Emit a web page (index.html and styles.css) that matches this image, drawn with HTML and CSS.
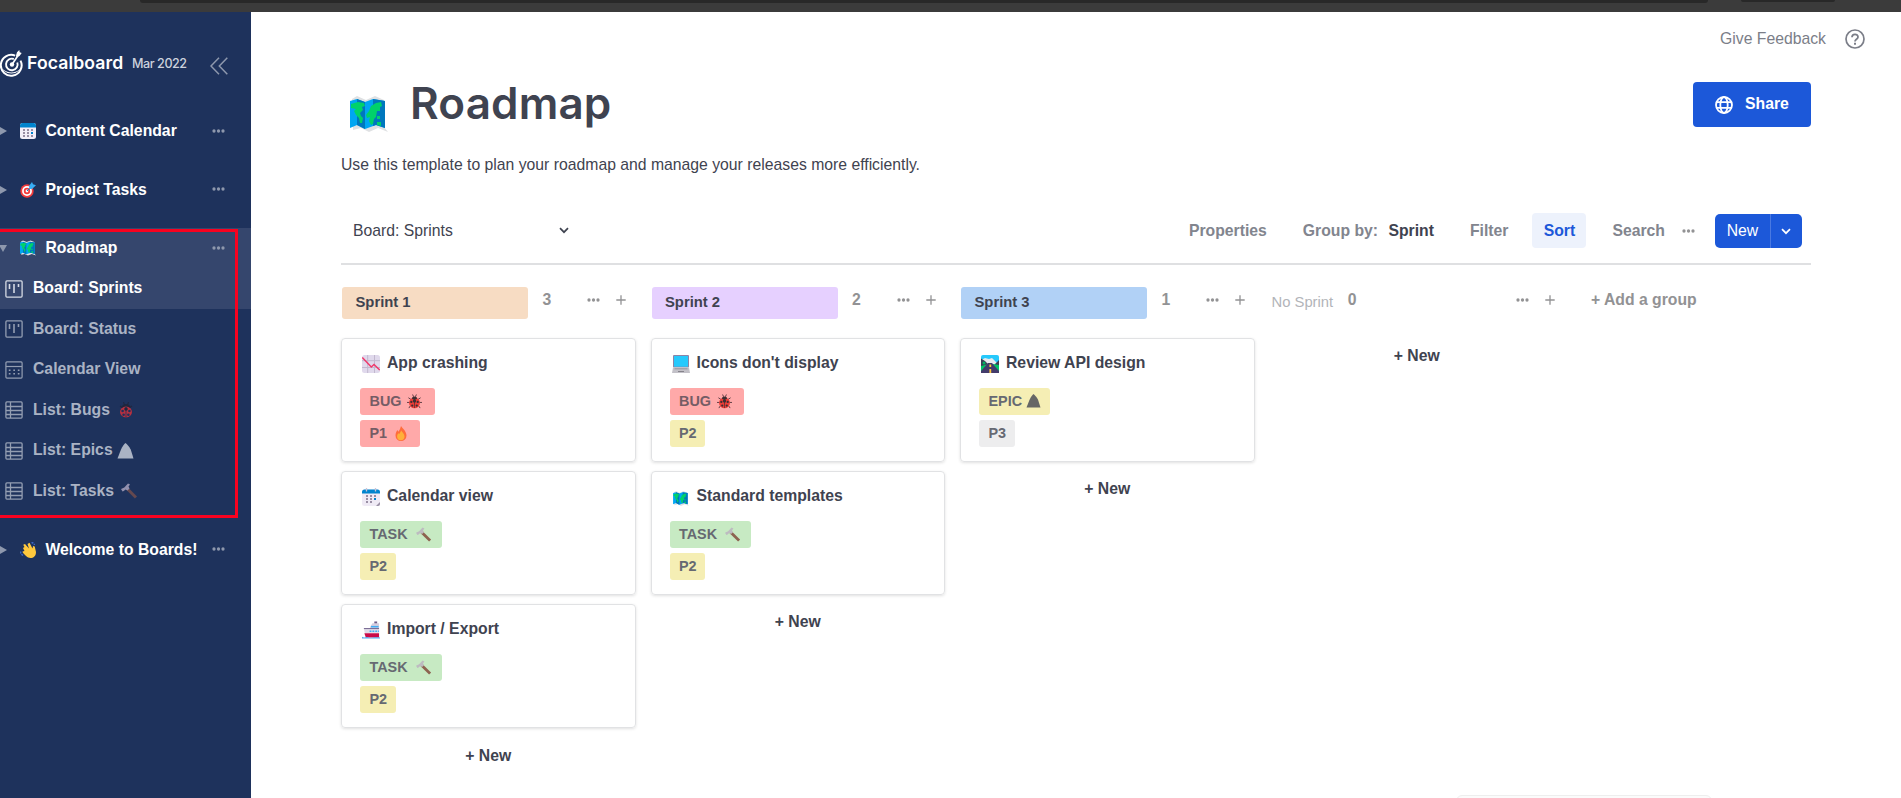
FILE: index.html
```
<!DOCTYPE html>
<html lang="en">
<head>
<meta charset="utf-8">
<title>Focalboard</title>
<link rel="stylesheet" href="styles.css">
</head>
<body>
<svg class="defs" width="0" height="0">
  <symbol id="dots" viewBox="0 0 14 4"><circle cx="2" cy="2" r="1.65"/><circle cx="6.5" cy="2" r="1.65"/><circle cx="11" cy="2" r="1.65"/></symbol>
  <symbol id="plus" viewBox="0 0 10 10"><path d="M5 .3v9.400M.3 5h9.400" fill="none" stroke="currentColor" stroke-width="1.300"/></symbol>
  <symbol id="chev" viewBox="0 0 10 7"><path d="M1 1.2l4 4 4-4" fill="none" stroke="currentColor" stroke-width="1.7"/></symbol>
  <symbol id="i-board" viewBox="0 0 18 18"><g fill="none" stroke="currentColor" stroke-width="1.3"><rect x=".9" y=".9" width="16.2" height="16.2" rx="1"/><path d="M4.5 4v5M9 4v9M13.500 4v3" stroke-width="1.6"/></g></symbol>
  <symbol id="i-cal" viewBox="0 0 18 18"><g fill="none" stroke="currentColor" stroke-width="1.2"><rect x=".9" y=".9" width="16.2" height="16.2" rx="1"/><path d="M1 5.5h16"/><path d="M3.8 9.2h11M3.8 12.8h11" stroke-width="1.6" stroke-dasharray="1.7 2.8"/></g></symbol>
  <symbol id="i-list" viewBox="0 0 18 18"><g fill="none" stroke="currentColor" stroke-width="1.3"><rect x=".9" y=".9" width="16.2" height="16.2" rx="1"/><path d="M5.5 1v16M1 5.500h16M1 9.500h16M1 13.500h16"/></g></symbol>
  <symbol id="e-cal" viewBox="0 0 18 18"><rect y="1.500" width="18" height="16.500" rx="2.500" fill="#efeaf5"/><path d="M0 5.500V4a2.500 2.500 0 0 1 2.500-2.500h13A2.500 2.500 0 0 1 18 4v1.500z" fill="#0084ce"/><path d="M4.500 0v3.500M13.500 0v3.500" stroke="#cdc4d6" stroke-width="1.300"/><g fill="#998ea4"><path d="M4 7h2v2H4zM8 7h2v2H8zM12 7h2v2h-2zM4 10h2v2H4zM8 10h2v2H8zM4 13h2v2H4zM8 13h2v2H8z"/></g><path d="M12 10h2v2h-2z" fill="#0084ce"/><path d="M14 18l4-4v2a2 2 0 0 1-2 2z" fill="#998ea4"/></symbol>
  <symbol id="e-calflat" viewBox="0 0 16 16"><rect width="16" height="16" rx="2.5" fill="#f3eef8"/><path d="M0 4.500V2.500A2.500 2.500 0 0 1 2.500 0h11A2.500 2.500 0 0 1 16 2.500v2z" fill="#0084ce"/><path d="M3 6h2v2H3zM7 6h2v2H7zM11 6h2v2h-2zM3 9h2v2H3zM7 9h2v2H7zM3 12h2v2H3zM7 12h2v2H7zM11 12h2v2h-2z" fill="#998ea4"/><path d="M11 9h2v2h-2z" fill="#0084ce"/></symbol>
  <symbol id="e-target" viewBox="0 0 16 16"><circle cx="7" cy="9" r="6.700" fill="#f23c3c"/><circle cx="7" cy="9" r="4.900" fill="#fff"/><circle cx="7" cy="9" r="3.200" fill="#f23c3c"/><circle cx="7" cy="9" r="1.400" fill="#fff"/><path d="M7 9l4-4.200" stroke="#0084ce" stroke-width="1"/><path d="M9 4l3-4 1 2.300 3 1-4 3.700-2.500 0z" fill="#38aef5"/></symbol>
  <symbol id="e-map" viewBox="0 0 38 36"><path d="M2 3L7 0l9 4 9-4 9 4v27l4 5-10-4-9 4-8-4-8 2z" fill="#dfe1e3"/><path d="M0 5l7-2 8 3 8-3 12 2v27l-9-3-11 4-8-4-7 3z" fill="#00a6f2"/><path d="M7 3l8 3v27l-8-4zM23 3l12 2v27l-9-3-3 1z" fill="#0077bd"/><path d="M1 8l7-2 6 1 1 3-3 1 1 3-3 3 1 3 2 2-1 5-2 0-1-5-3-3-2-4 2-2-5-1zM16 19l3-4 2-5 5-3 5-1 1 4-2 1 0 4-3 0-1 6-2 2-1 5-2 1-2-4 1-4-3 1zM27 20l3 0v3l-3 0zM27 26l4 0v4l-4-1z" fill="#00d26a"/></symbol>
  <symbol id="e-bug" viewBox="0 0 16 16"><path d="M1.500 4l3 2M14.500 4l-3 2M0 9h4M12 9h4M2 15l2-3M14 15l-2-3M6 .5l1 2.500M10 .5L9 3" stroke="#5b3a40" stroke-width="1" fill="none"/><ellipse cx="8" cy="9.500" rx="5.800" ry="5.800" fill="#ee3d37"/><path d="M5 4.600a3.200 3 0 0 1 6 0c-1 1.800-5 1.800-6 0zM7.700 5h.7v10h-.7z" fill="#3d2f33"/><circle cx="8" cy="7.500" r="1.800" fill="#3d2f33"/><circle cx="4.600" cy="8.500" r="1.200" fill="#3d2f33"/><circle cx="11.400" cy="8.500" r="1.200" fill="#3d2f33"/><circle cx="5.600" cy="12.300" r="1.200" fill="#3d2f33"/><circle cx="10.400" cy="12.300" r="1.200" fill="#3d2f33"/></symbol>
  <symbol id="e-bugdark" viewBox="0 0 14 16"><path d="M1 4l3 2M13 4l-3 2M4.500 0l1 3M9.500 0l-1 3" stroke="#202840" stroke-width="1.100"/><path d="M2.500 6a4.500 4 0 0 1 9 0z" fill="#20273e"/><ellipse cx="7" cy="10" rx="6" ry="5.400" fill="#b9303f"/><path d="M6.600 5h.8v10.500h-.8z" fill="#20305a"/><circle cx="7" cy="7" r="1.800" fill="#20273e"/><circle cx="3.600" cy="9" r="1.300" fill="#20305a"/><circle cx="10.400" cy="9" r="1.300" fill="#20305a"/><circle cx="4.600" cy="12.800" r="1.300" fill="#20305a"/><circle cx="9.400" cy="12.800" r="1.300" fill="#20305a"/></symbol>
  <symbol id="e-fire" viewBox="0 0 12 15"><path d="M6 0c1 2 5.500 5 5.500 9.500A5.500 5.500 0 0 1 .5 9.500C.5 7 1.500 5 2.500 4l.8 1.700C4.500 4.500 5.500 2 6 0z" fill="#ff6d3b"/><path d="M6.300 4.500c.5 1.500 3.200 3 3.200 6a3.700 3.700 0 0 1-7.400 0c0-2 .8-2.500 1.400-3.300l.8.800z" fill="#ffb03a"/></symbol>
  <symbol id="e-hammer" viewBox="0 0 16 16"><path d="M6 5.500l9 9" stroke="var(--handle)" stroke-width="3"/><path d="M0 6l3.300-1.500L7 .5l2 1-1.500 2 1 2-2 2-2-1-1.700 1.500-1.300.5z" fill="var(--head)"/></symbol>
  <symbol id="e-mount" viewBox="0 0 16 16"><path d="M0 15.500L3.500 6.500C5 3.500 6.500 1 8 0c1.500 1 3.500 3.500 5.200 6.500L16 15.500z" fill="currentColor"/></symbol>
  <symbol id="e-wave" viewBox="0 0 16 16"><path d="M3 6l1.500-1L3.200 2.800 5 2l4 4.500L7.500 2 9.500.8l3 5.700.6-2.500 1.600.4L16 10c0 4-2.500 6-5.500 6C7 16 5.500 13 3 11l-.5-1.500L4.500 9z" fill="#ffc83d"/><path d="M.5 9.500c0 2 1 3.500 3 4M11.500.5c1.500.3 2.500 1.200 3 2.500" fill="none" stroke="#3b66c8" stroke-width="1.500" stroke-dasharray="2 1"/></symbol>
  <symbol id="e-chart" viewBox="0 0 18 18"><rect width="18" height="18" rx="2.500" fill="#e0d9ec"/><path d="M5.700 0v18M12.500 0v18M0 5.700h18M0 12.500h18" stroke="#c2b8ce" stroke-width="1"/><path d="M.3 2.500l9 9.500L12 9.500l5.700 5.500" stroke="#f0386b" stroke-width="1.400" fill="none"/></symbol>
  <symbol id="e-laptop" viewBox="0 0 18 18"><rect x="1" width="16" height="12.500" rx="1" fill="#8c84a6"/><rect x="2" y="1" width="14" height="10.700" fill="#26c9fc"/><path d="M1 12.500h16l1 5.500H0z" fill="#c3c1c8"/><path d="M2.500 13.800h13" stroke="#96949c" stroke-width="1"/><path d="M6 16.500h6" stroke="#85838b" stroke-width="1"/></symbol>
  <symbol id="e-ship" viewBox="0 0 19 18"><path d="M13 0h3v3h-3z" fill="#6d5c87"/><path d="M9 5l2-3h7v6H8z" fill="#d5cedf"/><path d="M9.500 5.500h8" stroke="#3faef5" stroke-width="1.600"/><path d="M2 7.500h16v5H3z" fill="#e1dce9"/><path d="M2 7.500h16" stroke="#6d5c87" stroke-width="1"/><path d="M8 10.200h10" stroke="#3faef5" stroke-width="1.600" stroke-dasharray="2 1"/><path d="M2.500 12.500H18V17H4z" fill="#ca0b4a"/><path d="M0 16c3 2 4-.5 7 .8s5-.8 12 .2V18H0z" fill="#58a8ee"/></symbol>
  <symbol id="e-road" viewBox="0 0 18 18"><rect width="18" height="18" rx="2" fill="#26c9fc"/><path d="M0 5l4-2 4 1 3-1 4 4 3 3v3H0z" fill="#e8ebee"/><path d="M0 3.500L4 6l6 6H0zM18 5l-5 5v3h5z" fill="#3a4055"/><path d="M0 11l8-2h4l6 1v8H0z" fill="#00c565"/><circle cx="3" cy="8" r="1.500" fill="#00b463"/><path d="M7 8h4l7 8v2H0v-2z" fill="#433b6b"/><path d="M9.300 9.500v2.500M9.300 14v4" stroke="#ffc83d" stroke-width="1.800"/></symbol>
</svg>

<div class="chrome"><span class="chrome-url"></span><span class="chrome-pill"></span></div>
<div class="app">
  <aside class="sidebar">
    <header class="brand">
      <svg class="logo" viewBox="0 0 23 27"><path d="M0 13.500a11.500 11.500 0 0 0 22.800 0c-1 5-5.500 9-11.300 9S1 19 0 13.500z" fill="#fff"/><path d="M15.200 4.700A10.400 10.400 0 1 0 20.500 9.600" fill="none" stroke="#fff" stroke-width="2" transform="translate(0 1)"/><path d="M13.800 9A5.800 5.800 0 1 0 17.300 12.500" fill="none" stroke="#fff" stroke-width="1.900"/><circle cx="12" cy="14.500" r="2.200" fill="#fff"/><path d="M12 14.500l6-9" stroke="#fff" stroke-width="1.700"/><path d="M16 5.500L17 2.300 19.300 0l.4 2.300 2 .8L19.500 6l-2.800 1.200z" fill="#fff"/></svg>
      <span class="brand-name">Focalboard</span>
      <span class="brand-ver">Mar 2022</span>
      <svg class="collapse" viewBox="0 0 18 18"><path d="M9 .7L1 9l8 8.300M17.300.7L9.300 9l8 8.300" fill="none" stroke="currentColor" stroke-width="1.500"/></svg>
    </header>
    <section class="cat">
      <div class="cat-row"><i class="tri"></i><svg class="emo"><use href="#e-calflat"/></svg><b>Content Calendar</b><svg class="dots"><use href="#dots"/></svg></div>
    </section>
    <section class="cat">
      <div class="cat-row"><i class="tri"></i><svg class="emo"><use href="#e-target"/></svg><b>Project Tasks</b><svg class="dots"><use href="#dots"/></svg></div>
    </section>
    <section class="cat">
      <div class="marker"></div>
      <div class="cat-row active"><i class="tri open"></i><svg class="emo"><use href="#e-map"/></svg><b>Roadmap</b><svg class="dots"><use href="#dots"/></svg></div>
      <div class="view active"><svg class="vi"><use href="#i-board"/></svg><b>Board: Sprints</b></div>
      <div class="view"><svg class="vi"><use href="#i-board"/></svg><b>Board: Status</b></div>
      <div class="view"><svg class="vi"><use href="#i-cal"/></svg><b>Calendar View</b></div>
      <div class="view"><svg class="vi"><use href="#i-list"/></svg><b>List: Bugs</b><svg class="ve bugs"><use href="#e-bugdark"/></svg></div>
      <div class="view"><svg class="vi"><use href="#i-list"/></svg><b>List: Epics</b><svg class="ve epics"><use href="#e-mount"/></svg></div>
      <div class="view"><svg class="vi"><use href="#i-list"/></svg><b>List: Tasks</b><svg class="ve tasks"><use href="#e-hammer"/></svg></div>
    </section>
    <section class="cat">
      <div class="cat-row"><i class="tri"></i><svg class="emo"><use href="#e-wave"/></svg><b>Welcome to Boards!</b><svg class="dots"><use href="#dots"/></svg></div>
    </section>
  </aside>

  <main class="main">
    <div class="top">
      <span>Give Feedback</span>
      <svg class="help" viewBox="0 0 20 20"><circle cx="10" cy="10" r="9" fill="none" stroke="currentColor" stroke-width="1.700"/><path d="M7 8.200c0-3.800 6-3.800 6-.3 0 2.300-3 2.400-3 4.600" fill="none" stroke="currentColor" stroke-width="1.800"/><path d="M9 13.700h2v2H9z" fill="currentColor"/></svg>
    </div>
    <div class="title-row">
      <svg class="title-emo"><use href="#e-map"/></svg>
      <h1>Roadmap</h1>
      <button class="share"><svg viewBox="0 0 18 18"><g fill="none" stroke="#fff" stroke-width="1.800"><circle cx="9" cy="9" r="8"/><ellipse cx="9" cy="9" rx="3.700" ry="8"/><path d="M1.500 6.200h15M1.500 11.800h15"/></g></svg>Share</button>
    </div>
    <p class="desc">Use this template to plan your roadmap and manage your releases more efficiently.</p>
    <div class="toolbar">
      <span class="view-name">Board: Sprints</span>
      <svg class="chev"><use href="#chev"/></svg>
      <div class="tools">
        <span class="t-prop">Properties</span>
        <span class="t-group">Group by: <em>Sprint</em></span>
        <span class="t-filter">Filter</span>
        <span class="t-sort">Sort</span>
        <span class="t-search">Search</span>
        <svg class="dots"><use href="#dots"/></svg>
        <div class="new-btn"><span>New</span><i><svg class="chev"><use href="#chev"/></svg></i></div>
      </div>
    </div>

    <div class="board">
      <section class="col">
        <header class="col-head"><span class="pill orange">Sprint 1</span><span class="count">3</span><svg class="dots"><use href="#dots"/></svg><svg class="plus"><use href="#plus"/></svg></header>
        <article class="card"><h2><svg><use href="#e-chart"/></svg>App crashing</h2>
          <span class="tag red">BUG<svg class="g-bug"><use href="#e-bug"/></svg></span><span class="tag red p1">P1<svg class="g-fire"><use href="#e-fire"/></svg></span></article>
        <article class="card"><h2><svg><use href="#e-cal"/></svg>Calendar view</h2>
          <span class="tag green">TASK<svg class="g-ham"><use href="#e-hammer"/></svg></span><span class="tag yellow">P2</span></article>
        <article class="card"><h2><svg><use href="#e-ship"/></svg>Import / Export</h2>
          <span class="tag green">TASK<svg class="g-ham"><use href="#e-hammer"/></svg></span><span class="tag yellow">P2</span></article>
        <div class="add">+ New</div>
      </section>
      <section class="col">
        <header class="col-head"><span class="pill purple">Sprint 2</span><span class="count">2</span><svg class="dots"><use href="#dots"/></svg><svg class="plus"><use href="#plus"/></svg></header>
        <article class="card"><h2><svg><use href="#e-laptop"/></svg>Icons don't display</h2>
          <span class="tag red">BUG<svg class="g-bug"><use href="#e-bug"/></svg></span><span class="tag yellow">P2</span></article>
        <article class="card"><h2><svg class="map"><use href="#e-map"/></svg>Standard templates</h2>
          <span class="tag green">TASK<svg class="g-ham"><use href="#e-hammer"/></svg></span><span class="tag yellow">P2</span></article>
        <div class="add">+ New</div>
      </section>
      <section class="col">
        <header class="col-head"><span class="pill blue">Sprint 3</span><span class="count">1</span><svg class="dots"><use href="#dots"/></svg><svg class="plus"><use href="#plus"/></svg></header>
        <article class="card"><h2><svg><use href="#e-road"/></svg>Review API design</h2>
          <span class="tag yellow">EPIC<svg class="g-mount"><use href="#e-mount"/></svg></span><span class="tag gray">P3</span></article>
        <div class="add">+ New</div>
      </section>
      <section class="col">
        <header class="col-head"><span class="none">No Sprint</span><span class="count">0</span><svg class="dots"><use href="#dots"/></svg><svg class="plus"><use href="#plus"/></svg></header>
        <div class="add">+ New</div>
      </section>
      <div class="add-group">+ Add a group</div>
    </div>
    <div class="toast"></div>
  </main>
</div>
</body>
</html>
```
FILE: styles.css
```
* { box-sizing: border-box; }
html, body { margin: 0; height: 100%; overflow: hidden; }
body {
  font-family: "Liberation Sans", Arial, sans-serif;
  font-size: 15.75px;
  color: #3f4350;
  background: #fff;
}
svg { display: block; flex: none; }
.defs { position: absolute; }

.chrome { height: 12px; background: #3b3b3b; display: flex; align-items: flex-start; padding-left: 140px; }
.chrome-url { width: 1568px; height: 3px; background: #282828; border-radius: 0 0 8px 8px; }
.chrome-pill { width: 94px; height: 2px; margin-left: 33px; background: #282828; border-radius: 0 0 8px 8px; }

.app { display: flex; height: 786px; }

/* Sidebar */
.sidebar { width: 251px; background: #1e325c; color: #fff; flex: none; }
.dots { width: 14px; height: 4px; fill: currentColor; color: #929294; }
.sidebar .dots { color: #8e98ad; margin-left: auto; margin-right: 25px; margin-top: -1px; }
.brand { height: 98.75px; display: flex; align-items: center; }
.logo { width: 23px; height: 27px; margin-top: 5px; }
.brand-name { font: 600 17.6px/24px Inter, sans-serif; margin-left: 4px; width: 105px; margin-top: 4px; letter-spacing: .12px; }
.brand-ver { font: 500 12.6px/24px Inter, sans-serif; color: #ccd1dc; margin-top: 6px; letter-spacing: -.45px; }
.collapse { width: 18px; height: 18px; color: #8e98ad; margin-left: auto; margin-right: 23px; margin-top: 9px; }
.cat { margin-bottom: 18px; position: relative; }
.cat-row { height: 40.5px; display: flex; align-items: center; }
.cat-row b { white-space: nowrap; }
.tri { border-left: 7px solid #8e98ad; border-top: 4px solid transparent; border-bottom: 4px solid transparent; margin-right: 13px; }
.tri.open { border-left: 4px solid transparent; border-right: 4px solid transparent; border-top: 7px solid #8e98ad; border-bottom: 0; margin-left: -1px; }
.emo { width: 16px; height: 16px; margin-right: 9.5px; }
.view { height: 40.5px; display: flex; align-items: center; padding-left: 5px; color: #aab3c4; }
.active { background: #35466d; }
.view.active { color: #fff; }
.view b { margin-top: -1px; }
.vi { width: 18px; height: 18px; margin-right: 10px; color: #939db1; }
.view.active .vi { color: #d5dae4; }
.bugs { width: 14px; height: 16px; margin-left: 9px; }
.epics { width: 17px; height: 16px; margin-left: 4px; color: #aab3c4; }
.tasks { width: 16px; height: 16px; margin-left: 7px; --handle: #65494f; --head: #9290ae; }
.marker { position: absolute; left: -4px; top: 1px; width: 242px; height: 289px; border: 3px solid #f80220; }

/* Main */
.main { flex: 1; padding-left: 90px; position: relative; }
.top { height: 53px; display: flex; justify-content: flex-end; align-items: center; gap: 19px; padding-right: 36px; color: #7b7e88; }
.top .help { width: 20px; height: 20px; margin-top: 1px; }
.title-row { display: flex; align-items: flex-start; height: 76px; padding: 17px 90px 0 9px; }
.title-emo { width: 38px; height: 36px; margin-top: 14px; }
h1 { font: 600 44px/52px Inter, sans-serif; margin: -5px 0 0 22px; letter-spacing: .15px; }
.share { margin-left: auto; width: 118px; height: 45px; background: #1c58d9; color: #fff; border: 0; border-radius: 4px; display: flex; align-items: center; justify-content: center; gap: 12px; font: bold 15.75px "Liberation Sans", Arial, sans-serif; padding-bottom: 2px; }
.share svg { width: 18px; height: 18px; margin-top: 1px; }
.desc { margin: 13px 0 0; height: 20px; line-height: 21px; }
.toolbar { width: 1470px; margin-top: 24px; height: 67px; border-bottom: 2px solid #dfe0e2; display: flex; align-items: center; padding: 0 9px 0 12px; }
.view-name { width: 206px; }
.chev { width: 10px; height: 7px; }
.tools { margin-left: auto; display: flex; align-items: center; font-weight: bold; color: #82858e; white-space: nowrap; }
.t-prop, .t-group { margin-right: 36px; }
.t-group em { font-style: normal; color: #3f4350; margin-left: 6px; }
.t-filter { margin-right: 24px; }
.t-sort { width: 54px; height: 35px; line-height: 35px; text-align: center; background: #edf2fc; color: #1c58d9; border-radius: 4px; margin-right: 26px; }
.t-search { margin-right: 17px; }
.new-btn { margin-left: 19px; width: 87px; height: 34px; background: #1c58d9; border-radius: 5px; color: #fff; font-weight: normal; display: flex; align-items: center; margin-top: 1px; }
.new-btn span { width: 55px; text-align: center; }
.new-btn i { width: 32px; height: 34px; border-left: 1px solid #4a79e1; display: flex; align-items: center; justify-content: center; padding-right: 1px; }

/* Board */
.board { display: flex; padding-top: 22px; }
.col { width: 294.5px; margin-right: 15px; flex: none; }
.col-head { display: flex; height: 51px; align-items: flex-start; color: #929294; }
.pill { width: 186px; height: 32px; margin-left: 1px; border-radius: 3px; line-height: 31px; padding-left: 13.5px; font-size: 14.8px; font-weight: bold; color: #3f4350; }
.orange { background: #f7dcc3; }
.purple { background: #e6d0ff; }
.blue { background: #b1d1f6; }
.none { font-size: 14.8px; line-height: 31px; color: #b2b4b9; padding-left: 2px; }
.count { font-weight: bold; margin-left: 14.5px; line-height: 26px; }
.col-head .dots { margin: 11px 0 0 auto; }
.plus { width: 10px; height: 10px; margin: 8px 9.5px 0 15px; }
.card { height: 123.5px; margin-bottom: 9.7px; border: 1px solid #e1e2e4; border-radius: 4px; box-shadow: 0 1px 3px rgba(0, 0, 0, .12); padding: 13px 18px 0; display: flex; flex-direction: column; align-items: flex-start; }
h2 { margin: 0 0 14px; padding-left: 2px; font-size: 15.75px; line-height: 22px; display: flex; align-items: center; }
h2 svg { width: 18px; height: 18px; margin-right: 7px; margin-top: 2px; }
h2 .map { height: 15px; margin-top: 4px; }
.tag { height: 27px; margin-bottom: 4.5px; line-height: 26px; border-radius: 3px; padding: 0 8.5px 0 9.5px; font-size: 14.4px; font-weight: bold; color: #666972; display: flex; align-items: flex-start; }
.tag svg { margin-top: 6px; }
.red { background: #ffa9a9; color: #755c65; }
.green { background: #c7eac3; }
.yellow { background: #f5eeb4; }
.gray { background: #ededee; }
.g-bug { width: 15px; height: 15px; margin: 0 4px 0 6px; }
.g-fire { width: 12px; height: 15px; margin: 0 4px 0 8px; }
.g-ham { width: 15px; height: 15px; margin: 0 2.5px 0 8px; --handle: #8d6350; --head: #bdbbc0; }
.g-mount { width: 15px; height: 14px; margin-left: 4px; color: #666; }
.add { text-align: center; font-weight: bold; line-height: 20px; padding-top: 8px; }
.add-group { font-weight: bold; color: #929294; margin-left: 12px; line-height: 26px; }
.toast { position: absolute; left: 1205px; top: 783px; width: 256px; height: 30px; border: 1px solid #eee; border-radius: 6px; background: #fbfbfb; }
```
